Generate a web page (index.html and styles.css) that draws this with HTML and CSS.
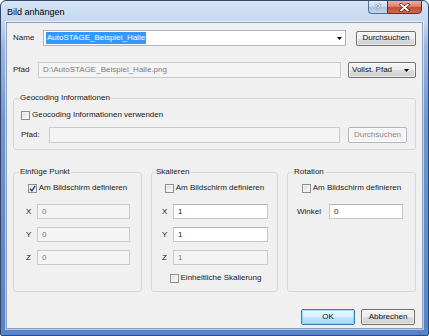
FILE: index.html
```html
<!DOCTYPE html>
<html lang="de">
<head>
<meta charset="utf-8">
<title>Bild anhängen</title>
<link rel="stylesheet" href="styles.css">
</head>
<body>
<div class="window">
  <div class="titlebar">
    <span class="title">Bild anhängen</span>
    <div class="caption-btns">
      <span class="cbtn help">?</span>
      <span class="cbtn close"><svg width="11" height="9" viewBox="0 0 11 9"><path d="M2 1.5 L9 7.5 M9 1.5 L2 7.5" stroke="#5a1e16" stroke-width="3.2" stroke-linecap="round"/><path d="M2 1.5 L9 7.5 M9 1.5 L2 7.5" stroke="#ffffff" stroke-width="1.8" stroke-linecap="round"/></svg></span>
    </div>
  </div>
  <div class="client">
    <div class="row row-name">
      <span class="lbl w-name">Name</span>
      <div class="field combo">
        <span class="sel">AutoSTAGE_Beispiel_Halle</span>
        <svg class="arrow" width="5" height="3" viewBox="0 0 5 3"><polygon points="0,0 5,0 2.5,3" fill="#000"/></svg>
      </div>
      <span class="btn btn-browse">Durchsuchen</span>
    </div>
    <div class="row row-path">
      <span class="lbl w-pfad">Pfad</span>
      <div class="field dis path">D:\AutoSTAGE_Beispiel_Halle.png</div>
      <span class="btn btn-drop">Vollst. Pfad<svg class="arrow" width="5" height="3" viewBox="0 0 5 3"><polygon points="0,0 5,0 2.5,3" fill="#000"/></svg></span>
    </div>

    <fieldset class="geo">
      <legend>Geocoding Informationen</legend>
      <div class="cbrow geo-cb"><span class="cb"></span><span>Geocoding Informationen verwenden</span></div>
      <div class="row geo-path">
        <span class="lbl w-gp">Pfad:</span>
        <div class="field dis"></div>
        <span class="btn btn-dis">Durchsuchen</span>
      </div>
    </fieldset>

    <div class="groups">
      <fieldset class="group g1">
        <legend>Einfüge Punkt</legend>
        <div class="cbrow top"><span class="cb on"><svg width="7" height="7" viewBox="0 0 7 7"><path d="M1 3.6 L2.9 5.8 L6.2 0.8" fill="none" stroke="#27407e" stroke-width="1.4"/></svg></span><span>Am Bildschirm definieren</span></div>
        <div class="frow first"><span class="lbl w-xyz">X</span><span class="field dis small">0</span></div>
        <div class="frow"><span class="lbl w-xyz">Y</span><span class="field dis small">0</span></div>
        <div class="frow"><span class="lbl w-xyz">Z</span><span class="field dis small">0</span></div>
      </fieldset>
      <fieldset class="group g2">
        <legend>Skalieren</legend>
        <div class="cbrow top"><span class="cb"></span><span>Am Bildschirm definieren</span></div>
        <div class="frow first"><span class="lbl w-xyz">X</span><span class="field small">1</span></div>
        <div class="frow"><span class="lbl w-xyz">Y</span><span class="field small">1</span></div>
        <div class="frow"><span class="lbl w-xyz">Z</span><span class="field dis small">1</span></div>
        <div class="cbrow uni"><span class="cb"></span><span>Einheitliche Skalierung</span></div>
      </fieldset>
      <fieldset class="group g3">
        <legend>Rotation</legend>
        <div class="cbrow top"><span class="cb"></span><span>Am Bildschirm definieren</span></div>
        <div class="frow first"><span class="lbl w-wink">Winkel</span><span class="field small">0</span></div>
      </fieldset>
    </div>

    <div class="actions">
      <span class="btn btn-ok">OK</span>
      <span class="btn btn-cancel">Abbrechen</span>
    </div>
  </div>
</div>
</body>
</html>
```
FILE: styles.css
```css
* { box-sizing: border-box; }
html, body { margin: 0; padding: 0; }
body {
  width: 429px;
  height: 336px;
  overflow: hidden;
  background: #ffffff;
  font-family: "Liberation Sans", Arial, sans-serif;
  font-size: 8px;
  color: #1a1a1a;
}
.window {
  width: 429px;
  height: 336px;
  border: 1px solid #33486a;
  border-radius: 6px 6px 2px 2px;
  background: linear-gradient(to bottom, #d6e4f5 0px, #c3d7ef 22px, #9ab8e2 45px, #6d97d3 120px, #5584ca 100%);
  display: flex;
  flex-direction: column;
  overflow: hidden;
}
.titlebar {
  flex: none;
  height: 21px;
  display: flex;
  align-items: flex-start;
  padding: 0 6px;
}
.title {
  font-size: 9px;
  line-height: 10px;
  margin-top: 6px;
  color: #000;
}
.caption-btns {
  margin-left: auto;
  margin-top: -1px;
  display: flex;
}
.cbtn {
  height: 14px;
  display: flex;
  align-items: center;
  justify-content: center;
  border: 1px solid #566d92;
}
.help {
  width: 19px;
  border-right: none;
  border-radius: 0 0 0 4px;
  background: linear-gradient(to bottom, #e3ecf7 0%, #c9d9ed 50%, #abc2df 51%, #c2d5ec 100%);
  color: #fff;
  font-size: 9px;
  font-weight: bold;
  text-shadow: 0 0 1px #2d4670, 0 0 1px #2d4670;
}
.close {
  width: 35px;
  border-color: #6e2b22;
  border-radius: 0 0 4px 0;
  background: linear-gradient(to bottom, #eab0a4 0%, #d9786a 50%, #c44a34 51%, #d3654f 100%);
}
.client {
  flex: none;
  height: 307px;
  margin: 0 5px;
  border: 1px solid #8ea1bd;
  box-shadow: 0 0 0 1px rgba(255, 255, 255, 0.55);
  background: #f0f0f0;
  padding: 7px 6px 0 6px;
}
.row {
  display: flex;
  align-items: center;
}
.lbl {
  flex: none;
  line-height: 10px;
}
.w-name { width: 30px; }
.w-pfad { width: 25px; }
.w-gp { width: 28px; }
.w-xyz { width: 11px; }
.w-wink { width: 32px; }

.field {
  height: 16px;
  border: 1px solid #c4c8ce;
  border-top-color: #aeb2b9;
  background: #fff;
  display: flex;
  align-items: center;
  padding: 0 0 0 4px;
  line-height: 10px;
  white-space: nowrap;
  overflow: hidden;
}
.field.small { height: 15px; flex: 1; }
.field.dis {
  background: #f4f4f4;
  border-color: #cbcbcb;
  color: #7d7d7d;
}
.row-name { height: 16px; }
.combo {
  width: 303px;
  flex: none;
  padding-left: 2px;
  border-color: #a9b6c9;
}
.sel {
  background: #3399ff;
  color: #fff;
  padding: 1px 1px;
}
.combo .arrow { margin-left: auto; margin-right: 3px; }

.btn {
  flex: none;
  display: flex;
  align-items: center;
  justify-content: center;
  border: 1px solid #707070;
  border-radius: 2px;
  background: linear-gradient(to bottom, #f4f4f4 0%, #ececec 50%, #dddddd 51%, #d0d0d0 100%);
  box-shadow: inset 0 0 0 1px rgba(255, 255, 255, 0.6);
  line-height: 10px;
  color: #111;
}
.btn-browse {
  width: 60px;
  height: 15px;
  margin-left: 10px;
}
.row-path { margin-top: 16px; height: 16px; }
.path { width: 303px; flex: none; }
.btn-drop {
  width: 68px;
  height: 16px;
  margin-left: 7px;
  justify-content: space-between;
  padding: 0 6px 0 3px;
}

fieldset {
  margin: 0;
  padding: 0;
  min-width: 0;
  border: 1px solid #d3d7db;
  border-radius: 3px;
}
legend {
  margin-left: 5px;
  padding: 0 1px;
  line-height: 10px;
  font-size: 8px;
  color: #1a1a1a;
}
.geo {
  margin-top: 15px;
  padding-bottom: 6px;
}
.cbrow {
  display: flex;
  align-items: center;
  gap: 2px;
  height: 12px;
  line-height: 10px;
}
.cb {
  flex: none;
  width: 9px;
  height: 9px;
  border: 1px solid #8e8f8f;
  background: linear-gradient(135deg, #d6d6d6 0%, #f0f0f0 60%, #fbfbfb 100%);
  box-shadow: inset 0 0 0 1px #f2f2f2;
  display: flex;
  align-items: center;
  justify-content: center;
}
.geo-cb { margin-top: 6px; padding-left: 7px; }
.geo-path {
  margin-top: 6px;
  padding: 0 8px 0 7px;
}
.geo-path .field { flex: 1; }
.btn-dis {
  width: 59px;
  height: 16px;
  margin-left: 8px;
  border-color: #b3b6b9;
  background: #f4f4f4;
  color: #8a8a8a;
}

.groups {
  display: grid;
  grid-template-columns: 129px 127px 129px;
  column-gap: 9px;
  margin-top: 17px;
}
.group { padding-bottom: 7px; }
.g2 legend { margin-left: 3px; }
.cbrow.top { margin-top: 5px; justify-content: center; }
.frow {
  display: flex;
  align-items: center;
  margin-top: 8px;
}
.frow.first { margin-top: 10px; }
.g1 .frow { padding: 0 11px 0 12px; }
.g2 .frow { padding: 0 9px 0 10px; }
.g3 .frow { padding: 0 12px 0 9px; }
.cbrow.uni { margin-top: 7px; justify-content: center; padding-left: 2px; }

.actions {
  display: flex;
  justify-content: flex-end;
  gap: 6px;
  margin-top: 17px;
  padding-right: 1px;
}
.btn-ok, .btn-cancel { width: 54px; height: 16px; }
.btn-ok {
  border-color: #3c7fb1;
  background: linear-gradient(to bottom, #eaf6fd 0%, #d9f0fc 50%, #bee6fd 51%, #a7d9f5 100%);
  box-shadow: inset 0 0 0 1px rgba(120, 200, 240, 0.6);
}
```
